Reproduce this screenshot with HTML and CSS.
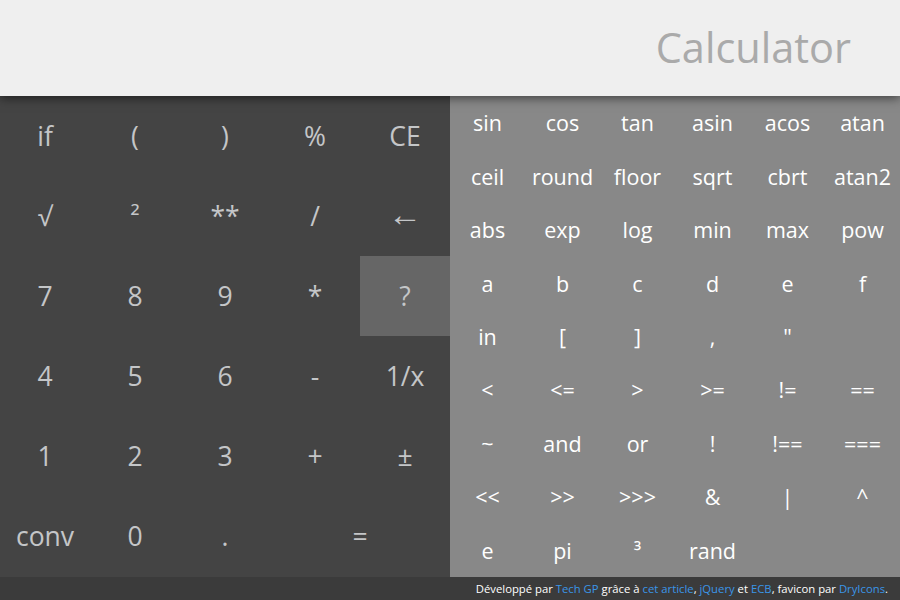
FILE: index.html
```html
<!DOCTYPE html>
<html lang="fr">
<head>
<meta charset="utf-8">
<title>Calculator</title>
<link rel="stylesheet" href="styles.css">
</head>
<body>
<header class="header">
  <h1 class="title">Calculator</h1>
</header>
<main class="main">
  <div class="pad pad-basic">
    <button class="key">if</button>
    <button class="key">(</button>
    <button class="key">)</button>
    <button class="key">%</button>
    <button class="key">CE</button>
    <button class="key">√</button>
    <button class="key">²</button>
    <button class="key">**</button>
    <button class="key">/</button>
    <button class="key key-arrow">←</button>
    <button class="key">7</button>
    <button class="key">8</button>
    <button class="key">9</button>
    <button class="key">*</button>
    <button class="key key-active">?</button>
    <button class="key">4</button>
    <button class="key">5</button>
    <button class="key">6</button>
    <button class="key">-</button>
    <button class="key">1/x</button>
    <button class="key">1</button>
    <button class="key">2</button>
    <button class="key">3</button>
    <button class="key">+</button>
    <button class="key">±</button>
    <button class="key">conv</button>
    <button class="key">0</button>
    <button class="key">.</button>
    <button class="key key-wide">=</button>
  </div>
  <div class="pad pad-adv">
    <button class="key">sin</button>
    <button class="key">cos</button>
    <button class="key">tan</button>
    <button class="key">asin</button>
    <button class="key">acos</button>
    <button class="key">atan</button>
    <button class="key">ceil</button>
    <button class="key">round</button>
    <button class="key">floor</button>
    <button class="key">sqrt</button>
    <button class="key">cbrt</button>
    <button class="key">atan2</button>
    <button class="key">abs</button>
    <button class="key">exp</button>
    <button class="key">log</button>
    <button class="key">min</button>
    <button class="key">max</button>
    <button class="key">pow</button>
    <button class="key">a</button>
    <button class="key">b</button>
    <button class="key">c</button>
    <button class="key">d</button>
    <button class="key">e</button>
    <button class="key">f</button>
    <button class="key">in</button>
    <button class="key">[</button>
    <button class="key">]</button>
    <button class="key">,</button>
    <button class="key">"</button>
    <span class="key"></span>
    <button class="key">&lt;</button>
    <button class="key">&lt;=</button>
    <button class="key">&gt;</button>
    <button class="key">&gt;=</button>
    <button class="key">!=</button>
    <button class="key">==</button>
    <button class="key">~</button>
    <button class="key">and</button>
    <button class="key">or</button>
    <button class="key">!</button>
    <button class="key">!==</button>
    <button class="key">===</button>
    <button class="key">&lt;&lt;</button>
    <button class="key">&gt;&gt;</button>
    <button class="key">&gt;&gt;&gt;</button>
    <button class="key">&amp;</button>
    <button class="key">|</button>
    <button class="key">^</button>
    <button class="key">e</button>
    <button class="key">pi</button>
    <button class="key">³</button>
    <button class="key">rand</button>
  </div>
</main>
<footer class="footer">
  Développé par <a href="#">Tech GP</a> grâce à <a href="#">cet article</a>, <a href="#">jQuery</a> et <a href="#">ECB</a>, favicon par <a href="#">DryIcons</a>.
</footer>
</body>
</html>
```

FILE: styles.css
```css
* { box-sizing: border-box; }
html, body {
  margin: 0;
  padding: 0;
  width: 900px;
  height: 600px;
  overflow: hidden;
  font-family: "Open Sans", "Noto Sans", sans-serif;
}
.header {
  position: relative;
  z-index: 2;
  height: 96px;
  background: #efefef;
  box-shadow: 0 2px 10px rgba(0, 0, 0, 0.55);
  display: flex;
  justify-content: flex-end;
  align-items: center;
  padding-right: 49px;
}
.title {
  margin: 0;
  font-size: 41.5px;
  font-weight: 400;
  color: #aaaaaa;
  line-height: 1;
}
.main {
  display: flex;
  height: 481px;
}
.pad {
  display: grid;
  width: 450px;
}
.pad-basic {
  background: #444444;
  grid-template-columns: repeat(5, 90px);
  grid-template-rows: repeat(6, 80px);
}
.pad-adv {
  background: #888888;
  grid-template-columns: repeat(6, 75px);
  grid-template-rows: repeat(9, 1fr);
}
.key {
  border: 0;
  margin: 0;
  padding: 0;
  background: transparent;
  font-family: inherit;
  display: flex;
  align-items: center;
  justify-content: center;
  cursor: pointer;
}
.pad-basic .key {
  font-size: 26.5px;
  color: #c4c6c8;
}
.pad-basic .key-arrow {
  font-size: 34px;
  font-weight: 300;
  padding-bottom: 6px;
}
.pad-adv .key {
  font-size: 21.5px;
  color: #ffffff;
}
.key-active {
  background: #666666;
}
.key-wide {
  grid-column: span 2;
}
.footer {
  height: 23px;
  background: #3b3b3b;
  color: #ffffff;
  font-size: 11.3px;
  text-align: right;
  padding-right: 12px;
  line-height: 23px;
}
.footer a {
  color: #3a96e8;
  text-decoration: none;
}
```
